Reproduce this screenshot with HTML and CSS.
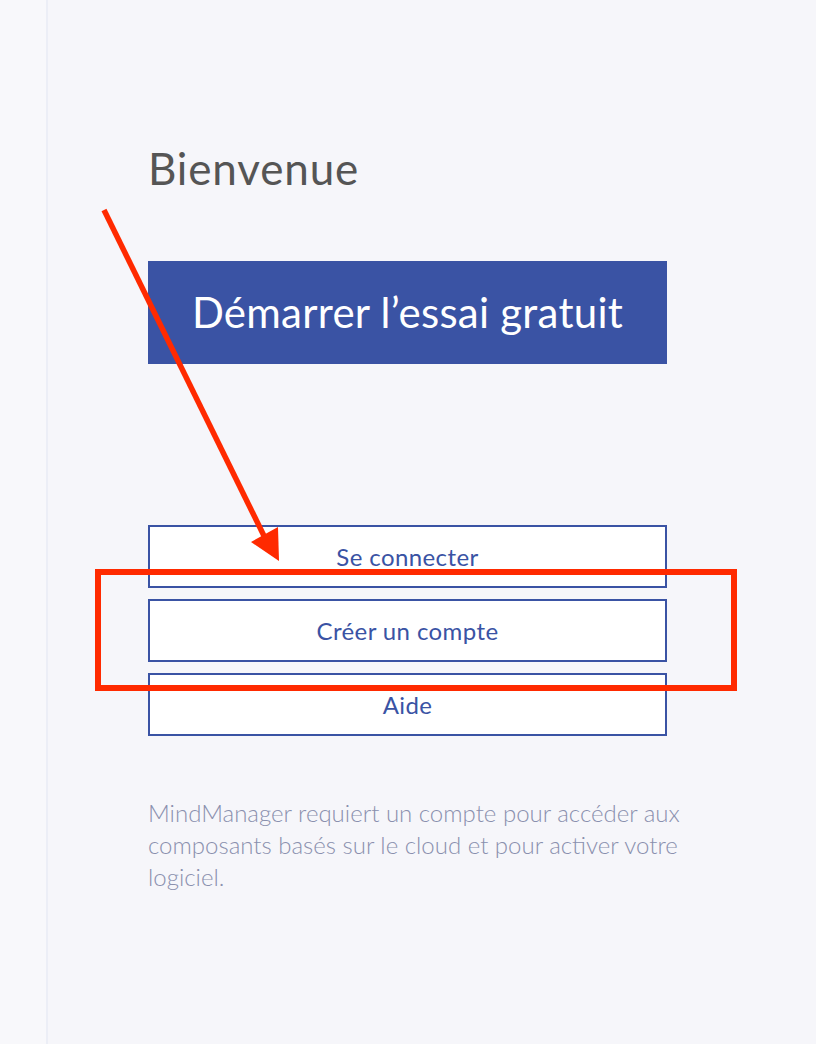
FILE: index.html
```html
<!DOCTYPE html>
<html lang="fr">
<head>
<meta charset="utf-8">
<title>Bienvenue</title>
<link rel="stylesheet" href="styles.css">
</head>
<body>
<div class="app">
  <aside class="sidebar"></aside>
  <main class="main">
    <h1 class="title">Bienvenue</h1>
    <button class="btn-primary">Démarrer l’essai gratuit</button>
    <div class="actions">
      <button class="btn-outline">Se connecter</button>
      <button class="btn-outline">Créer un compte</button>
      <button class="btn-outline">Aide</button>
    </div>
    <p class="note">MindManager requiert un compte pour accéder aux composants basés sur le cloud et pour activer votre logiciel.</p>
  </main>
  <svg class="annotation" width="816" height="1044" viewBox="0 0 816 1044">
    <line x1="104" y1="210" x2="266" y2="540" stroke="#ff2a00" stroke-width="5.5"/>
    <polygon points="279,561 251,542 278,527" fill="#ff2a00"/>
    <rect x="98" y="572" width="636" height="116" fill="none" stroke="#ff2a00" stroke-width="6"/>
  </svg>
</div>
</body>
</html>
```
FILE: styles.css
```css
* { box-sizing: border-box; }
html, body { margin: 0; padding: 0; }
body {
  background: #f6f6fa;
  font-family: "Lato", "Liberation Sans", sans-serif;
}
.app {
  position: relative;
  display: flex;
  width: 816px;
  height: 1044px;
  overflow: hidden;
}
.sidebar {
  width: 48px;
  flex: none;
  background: #f8f8fb;
  border-right: 2px solid #eceef6;
}
.main {
  flex: 1;
  padding: 142px 0 0 100px;
  display: flex;
  flex-direction: column;
  align-items: flex-start;
}
.title {
  margin: 0;
  font-size: 44px;
  font-weight: 400;
  line-height: 52px;
  color: #555555;
  letter-spacing: 0.85px;
}
.btn-primary {
  margin-top: 67px;
  width: 519px;
  height: 103px;
  border: none;
  background: #3a53a4;
  color: #ffffff;
  font-family: inherit;
  font-size: 42px;
  font-weight: 400;
  letter-spacing: 0.25px;
  padding: 0 0 2px;
}
.actions {
  margin-top: 161px;
  display: flex;
  flex-direction: column;
  gap: 11px;
}
.btn-outline {
  width: 519px;
  height: 63px;
  background: #ffffff;
  border: 2px solid #3a53a4;
  color: #3a53a4;
  font-family: inherit;
  font-size: 24px;
  font-weight: 400;
  letter-spacing: 0.4px;
  padding: 0;
}
.note {
  margin: 61px 0 0;
  width: 540px;
  font-size: 24px;
  line-height: 32px;
  font-weight: 300;
  color: #8a90ae;
}
.annotation {
  position: absolute;
  left: 0;
  top: 0;
  pointer-events: none;
}
```
